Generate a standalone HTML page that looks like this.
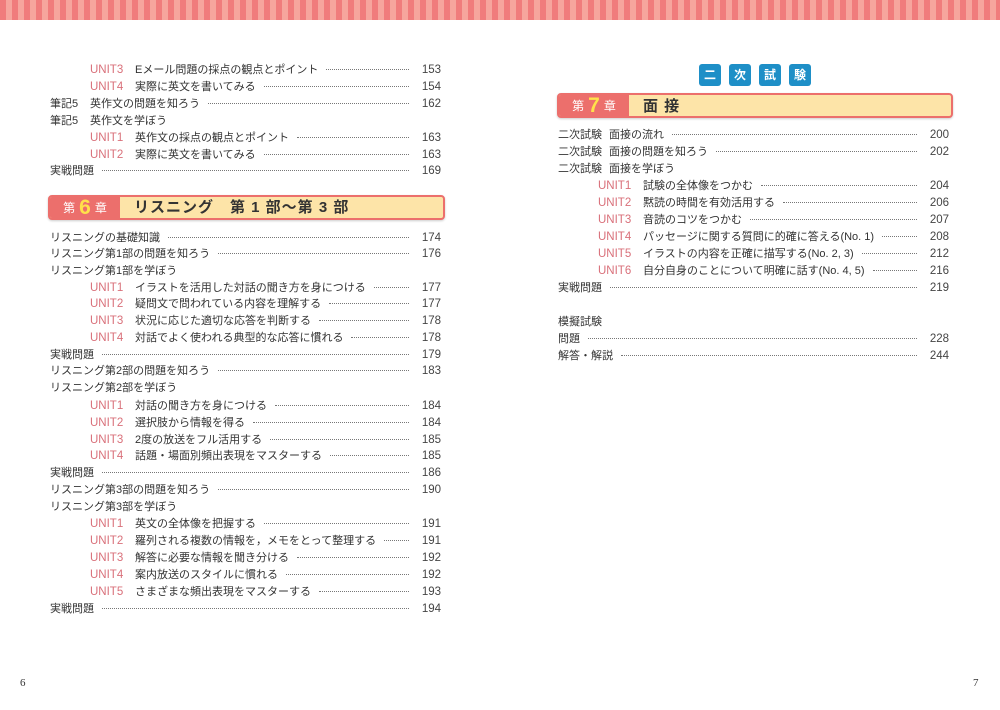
<!DOCTYPE html>
<html><head><meta charset="utf-8"><style>
*{box-sizing:border-box}
body{margin:0;width:1000px;height:710px;background:#fff;position:relative;overflow:hidden;font-family:"Liberation Sans","Noto Sans CJK JP",sans-serif;color:#333}
.stripe{position:absolute;left:0;top:0;width:1000px;height:20px;background:repeating-linear-gradient(90deg,#f07c7c 0 6px,#f6a59d 6px 12px)}
.r{position:absolute;display:flex;align-items:baseline;height:14px;font-size:11px;line-height:14px;white-space:nowrap}
.L{left:50px;width:391px}.R{left:558px;width:391px}
.u{color:#d9707a;width:45px;display:inline-block;font-size:11.5px}
.in{padding-left:40px}
.lb{width:40px;display:inline-block}
.lb2{width:51px;display:inline-block}
.d{flex:1;border-bottom:1px dotted #777;margin:0 8px;height:0;position:relative;top:-3px}
.p{width:24px;text-align:right;font-size:11.5px;color:#444}
.hd{position:absolute;height:25px;border:2px solid #ec6f6c;border-radius:4px;background:#fde4a8;box-shadow:0 1px 2px rgba(0,0,0,.2);overflow:hidden}
.hd .red{position:absolute;left:0;top:0;bottom:0;width:70px;background:#ec6f6c;color:#fff;font-size:12px;line-height:22px;text-align:center}
.hd .red b{color:#ffe14a;font-size:21px;margin:0 4px;font-weight:bold;vertical-align:-2px}
.hd .tt{position:absolute;left:84px;top:0;line-height:22px;font-size:15px;font-weight:bold;color:#333;letter-spacing:1px}
.bx{position:absolute;top:64px;width:22px;height:22px;background:#1e8fc7;border-radius:3px;color:#fff;font-size:12px;font-weight:bold;line-height:22px;text-align:center}
.pg{position:absolute;top:677px;font-family:"Liberation Serif",serif;font-size:11px}
</style></head><body>
<div class="stripe"></div>

<div class="r L in" style="top:63px"><span class="u">UNIT3</span>Eメール問題の採点の観点とポイント<span class="d"></span><span class="p">153</span></div>
<div class="r L in" style="top:80px"><span class="u">UNIT4</span>実際に英文を書いてみる<span class="d"></span><span class="p">154</span></div>
<div class="r L" style="top:97px"><span class="lb">筆記5</span>英作文の問題を知ろう<span class="d"></span><span class="p">162</span></div>
<div class="r L" style="top:114px"><span class="lb">筆記5</span>英作文を学ぼう</div>
<div class="r L in" style="top:131px"><span class="u">UNIT1</span>英作文の採点の観点とポイント<span class="d"></span><span class="p">163</span></div>
<div class="r L in" style="top:148px"><span class="u">UNIT2</span>実際に英文を書いてみる<span class="d"></span><span class="p">163</span></div>
<div class="r L" style="top:164px">実戦問題<span class="d"></span><span class="p">169</span></div>

<div class="hd" style="left:48px;top:195px;width:397px"><div class="red">第<b>6</b>章</div><div class="tt">リスニング　第 1 部～第 3 部</div></div>

<div class="r L" style="top:231px">リスニングの基礎知識<span class="d"></span><span class="p">174</span></div>
<div class="r L" style="top:247px">リスニング第1部の問題を知ろう<span class="d"></span><span class="p">176</span></div>
<div class="r L" style="top:264px">リスニング第1部を学ぼう</div>
<div class="r L in" style="top:281px"><span class="u">UNIT1</span>イラストを活用した対話の聞き方を身につける<span class="d"></span><span class="p">177</span></div>
<div class="r L in" style="top:297px"><span class="u">UNIT2</span>疑問文で問われている内容を理解する<span class="d"></span><span class="p">177</span></div>
<div class="r L in" style="top:314px"><span class="u">UNIT3</span>状況に応じた適切な応答を判断する<span class="d"></span><span class="p">178</span></div>
<div class="r L in" style="top:331px"><span class="u">UNIT4</span>対話でよく使われる典型的な応答に慣れる<span class="d"></span><span class="p">178</span></div>
<div class="r L" style="top:348px">実戦問題<span class="d"></span><span class="p">179</span></div>
<div class="r L" style="top:364px">リスニング第2部の問題を知ろう<span class="d"></span><span class="p">183</span></div>
<div class="r L" style="top:381px">リスニング第2部を学ぼう</div>
<div class="r L in" style="top:399px"><span class="u">UNIT1</span>対話の聞き方を身につける<span class="d"></span><span class="p">184</span></div>
<div class="r L in" style="top:416px"><span class="u">UNIT2</span>選択肢から情報を得る<span class="d"></span><span class="p">184</span></div>
<div class="r L in" style="top:433px"><span class="u">UNIT3</span>2度の放送をフル活用する<span class="d"></span><span class="p">185</span></div>
<div class="r L in" style="top:449px"><span class="u">UNIT4</span>話題・場面別頻出表現をマスターする<span class="d"></span><span class="p">185</span></div>
<div class="r L" style="top:466px">実戦問題<span class="d"></span><span class="p">186</span></div>
<div class="r L" style="top:483px">リスニング第3部の問題を知ろう<span class="d"></span><span class="p">190</span></div>
<div class="r L" style="top:500px">リスニング第3部を学ぼう</div>
<div class="r L in" style="top:517px"><span class="u">UNIT1</span>英文の全体像を把握する<span class="d"></span><span class="p">191</span></div>
<div class="r L in" style="top:534px"><span class="u">UNIT2</span>羅列される複数の情報を，メモをとって整理する<span class="d"></span><span class="p">191</span></div>
<div class="r L in" style="top:551px"><span class="u">UNIT3</span>解答に必要な情報を聞き分ける<span class="d"></span><span class="p">192</span></div>
<div class="r L in" style="top:568px"><span class="u">UNIT4</span>案内放送のスタイルに慣れる<span class="d"></span><span class="p">192</span></div>
<div class="r L in" style="top:585px"><span class="u">UNIT5</span>さまざまな頻出表現をマスターする<span class="d"></span><span class="p">193</span></div>
<div class="r L" style="top:602px">実戦問題<span class="d"></span><span class="p">194</span></div>

<div class="bx" style="left:699px">二</div>
<div class="bx" style="left:729px">次</div>
<div class="bx" style="left:759px">試</div>
<div class="bx" style="left:789px">験</div>

<div class="hd" style="left:557px;top:93px;width:396px"><div class="red">第<b>7</b>章</div><div class="tt" style="top:1px">面 接</div></div>

<div class="r R" style="top:128px"><span class="lb2">二次試験</span>面接の流れ<span class="d"></span><span class="p">200</span></div>
<div class="r R" style="top:145px"><span class="lb2">二次試験</span>面接の問題を知ろう<span class="d"></span><span class="p">202</span></div>
<div class="r R" style="top:162px"><span class="lb2">二次試験</span>面接を学ぼう</div>
<div class="r R in" style="top:179px"><span class="u">UNIT1</span>試験の全体像をつかむ<span class="d"></span><span class="p">204</span></div>
<div class="r R in" style="top:196px"><span class="u">UNIT2</span>黙読の時間を有効活用する<span class="d"></span><span class="p">206</span></div>
<div class="r R in" style="top:213px"><span class="u">UNIT3</span>音読のコツをつかむ<span class="d"></span><span class="p">207</span></div>
<div class="r R in" style="top:230px"><span class="u">UNIT4</span>パッセージに関する質問に的確に答える(No. 1)<span class="d"></span><span class="p">208</span></div>
<div class="r R in" style="top:247px"><span class="u">UNIT5</span>イラストの内容を正確に描写する(No. 2, 3)<span class="d"></span><span class="p">212</span></div>
<div class="r R in" style="top:264px"><span class="u">UNIT6</span>自分自身のことについて明確に話す(No. 4, 5)<span class="d"></span><span class="p">216</span></div>
<div class="r R" style="top:281px">実戦問題<span class="d"></span><span class="p">219</span></div>
<div class="r R" style="top:315px">模擬試験</div>
<div class="r R" style="top:332px">問題<span class="d"></span><span class="p">228</span></div>
<div class="r R" style="top:349px">解答・解説<span class="d"></span><span class="p">244</span></div>

<div class="pg" style="left:20px">6</div>
<div class="pg" style="left:973px">7</div>
</body></html>
